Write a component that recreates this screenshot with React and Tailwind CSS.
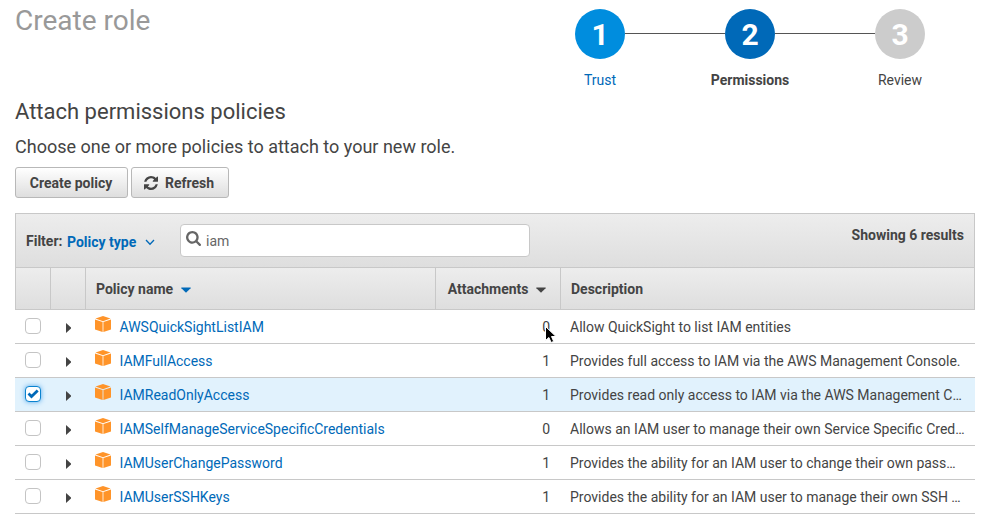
const policies = [
  { name: 'AWSQuickSightListIAM', count: 0, text: 'Allow QuickSight to list IAM entities' },
  { name: 'IAMFullAccess', count: 1, text: 'Provides full access to IAM via the AWS Management Console.' },
  { name: 'IAMReadOnlyAccess', count: 1, text: 'Provides read only access to IAM via the AWS Management C…', checked: true },
  { name: 'IAMSelfManageServiceSpecificCredentials', count: 0, text: 'Allows an IAM user to manage their own Service Specific Cred…' },
  { name: 'IAMUserChangePassword', count: 1, text: 'Provides the ability for an IAM user to change their own pass…' },
  { name: 'IAMUserSSHKeys', count: 1, text: 'Provides the ability for an IAM user to manage their own SSH …' },
];

function RefreshIcon() {
  return (
    <svg className="h-[14px] w-[14px]" viewBox="0 0 1536 1536" fill="currentColor">
      <path d="M1511 928q0 5-1 7-64 268-268 434.5t-478 166.5q-146 0-282.5-55t-243.5-157l-129 129q-19 19-45 19t-45-19-19-45v-448q0-26 19-45t45-19h448q26 0 45 19t19 45-19 45l-137 137q71 66 161 102t187 36q134 0 250-65t186-179q11-17 53-117 8-23 30-23h192q13 0 22.5 9.5t9.5 22.5zm25-800v448q0 26-19 45t-45 19h-448q-26 0-45-19t-19-45 19-45l138-138q-148-137-349-137-134 0-250 65t-186 179q-11 17-53 117-8 23-30 23h-199q-13 0-22.5-9.5t-9.5-22.5v-7q65-268 270-434.5t480-166.5q146 0 284 55.5t245 156.5l130-129q19-19 45-19t45 19 19 45z" />
    </svg>
  );
}

function SearchIcon() {
  return (
    <svg className="mb-[4px] h-[15px] w-[15px] shrink-0 text-[#666]" viewBox="0 128 1664 1664" fill="currentColor">
      <path d="M1152 832q0-185-131.5-316.5t-316.5-131.5-316.5 131.5-131.5 316.5 131.5 316.5 316.5 131.5 316.5-131.5 131.5-316.5zm512 832q0 52-38 90t-90 38q-54 0-90-38l-343-342q-179 124-399 124-143 0-273.5-55.5t-225-150-150-225-55.5-273.5 55.5-273.5 150-225 225-150 273.5-55.5 273.5 55.5 225 150 150 225 55.5 273.5q0 220-124 399l343 343q37 37 37 90z" />
    </svg>
  );
}

function CubeIcon() {
  return (
    <svg className="mb-[5px] h-4 w-4 shrink-0" viewBox="0 0 16 16" fill="#ff9429">
      <path d="M8 0 L15.5 2.6 L8 5.2 L0.5 2.6 Z" />
      <path d="M0 3.4 L7.6 6 V16 L0 13.4 Z" />
      <path d="M16 3.4 L8.4 6 V16 L16 13.4 Z" />
    </svg>
  );
}

function Caret({ className }) {
  return (
    <svg className={className} width="10" height="6" viewBox="0 0 10 6" fill="currentColor">
      <path d="M0.5 0.5 H9.5 Q10 0.8 9.6 1.2 L5 5.8 L0.4 1.2 Q0 0.8 0.5 0.5 Z" />
    </svg>
  );
}

function Checkbox({ checked }) {
  if (!checked) return <span className="h-4 w-4 rounded-[4px] border border-[#c4c4c4] bg-white" />;
  return (
    <span className="flex h-4 w-4 items-center justify-center rounded-[4px] border border-[#0a83cf] bg-white shadow-[0_0_5px_#52a8ec]">
      <svg width="12" height="10" viewBox="0 0 12 10" fill="none" stroke="#0069b8" strokeWidth="2.8">
        <path d="M1.5 4.6 L4.5 7.6 L10.7 1.6" />
      </svg>
    </span>
  );
}

function Step({ number, label, circle, text }) {
  return (
    <div className="flex w-[50px] flex-col items-center">
      <div className={`flex h-[50px] w-[50px] items-center justify-center rounded-full pt-px text-[30px] font-bold text-white ${circle}`}>{number}</div>
      <div className={`mt-[11px] leading-5 whitespace-nowrap ${text}`}>{label}</div>
    </div>
  );
}

const button = 'flex h-[31px] items-center justify-center rounded-[3px] border border-[#b8b8b8] bg-gradient-to-b from-white to-[#dedede] font-bold';

export default function App() {
  return (
    <div className="h-[526px] w-[996px] overflow-hidden bg-white pl-[15px] font-['Roboto',sans-serif] text-[14px] text-[#444]">
      <header className="flex h-[96px] justify-between pr-[71px]">
        <h1 className="pt-[3px] text-[28px] leading-9 text-[#999]">Create role</h1>
        <div className="flex pt-[9px]">
          <Step number="1" label="Trust" circle="bg-[#008dde]" text="text-[#0069b8]" />
          <div className="mt-6 h-px w-[100px] bg-[#555]" />
          <Step number="2" label="Permissions" circle="bg-[#0069b8]" text="font-bold" />
          <div className="mt-6 h-px w-[100px] bg-[#555]" />
          <Step number="3" label="Review" circle="bg-[#ccc]" text="" />
        </div>
      </header>
      <h2 className="h-[36px] pt-px text-[22px] leading-[30px]">Attach permissions policies</h2>
      <p className="h-[35px] text-[18px] leading-[30px]">Choose one or more policies to attach to your new role.</p>
      <div className="flex gap-[3px]">
        <button className={`w-[113px] pt-[2px] pr-px ${button}`}>Create policy</button>
        <button className={`w-[98px] gap-[7px] pr-[2px] ${button}`}><RefreshIcon /><span className="pt-[2px]">Refresh</span></button>
      </div>
      <div className="mt-[15px] w-[960px]">
        <div className="flex h-[54px] items-center border border-b-0 border-[#c8c8c8] bg-gradient-to-b from-[#ededed] to-[#dedede] pr-[10px] pl-[10px] font-bold">
          <span className="w-[41px] pt-[2px]">Filter:</span>
          <span className="flex w-[113px] items-center gap-[9px] pt-[4px] text-[#0069b8]">
            Policy type
            <svg width="10" height="7" viewBox="0 0 10 7" fill="none" stroke="currentColor" strokeWidth="1.3"><path d="M1 1 L5 5.3 L9 1" /></svg>
          </span>
          <div className="flex h-[33px] w-[350px] items-center gap-[5px] rounded-[4px] border border-[#c8c8c8] bg-white pl-[5px] font-normal text-[#666]">
            <SearchIcon />
            <span className="pt-[2px]">iam</span>
          </div>
          <span className="mb-[10px] ml-auto">Showing 6 results</span>
        </div>
        <div className="grid h-[43px] grid-cols-[36px_35px_350px_125px_414px] border border-[#c8c8c8] bg-gradient-to-b from-[#ededed] to-[#dedede] font-bold">
          <div className="-ml-px mr-px border-r border-[#c8c8c8]" />
          <div className="-ml-px mr-px border-r border-[#c8c8c8]" />
          <div className="-ml-px mr-px flex items-center border-r border-[#c8c8c8] pt-[2px] pl-[10px]">Policy name<Caret className="ml-2 text-[#0069b8]" /></div>
          <div className="-ml-px mr-px flex items-center justify-end border-r border-[#c8c8c8] pt-[2px] pr-[14px]">Attachments<Caret className="ml-[7.5px]" /></div>
          <div className="-ml-px flex items-center pt-[2px] pl-[10px]">Description</div>
        </div>
        {policies.map((policy, i) => (
          <div key={policy.name} className={`relative grid h-[34px] grid-cols-[36px_35px_350px_125px_414px] items-center border-b border-[#c8c8c8] ${policy.checked ? 'bg-[#e1f2fd]' : ''}`}>
            <div className="mb-[2px] flex pl-[10px]"><Checkbox checked={policy.checked} /></div>
            <div className="pl-[15px]">
              <svg className="mt-[2px]" width="5" height="10" viewBox="0 0 5 10" fill="#444"><path d="M0 0 L5 4.5 V5.5 L0 10 Z" /></svg>
            </div>
            <div className="flex items-center gap-[8.5px] pl-[9px] text-[#0069b8]"><CubeIcon /><span className="pt-px">{policy.name}</span></div>
            <div className="pt-px pr-[11px] text-right">{policy.count}</div>
            <div className="pt-px pl-[9px] whitespace-nowrap">{policy.text}</div>
            {i === 0 && (
              <svg className="absolute top-[15px] left-[529px]" width="15" height="20" viewBox="0 0 15 20">
                <path d="M1.5 1.5 V15.5 L4.9 12.5 L7.1 17.5 L9.7 16.4 L7.5 11.5 H12 Z" fill="#000" stroke="#fff" strokeWidth="1" />
              </svg>
            )}
          </div>
        ))}
      </div>
    </div>
  );
}
